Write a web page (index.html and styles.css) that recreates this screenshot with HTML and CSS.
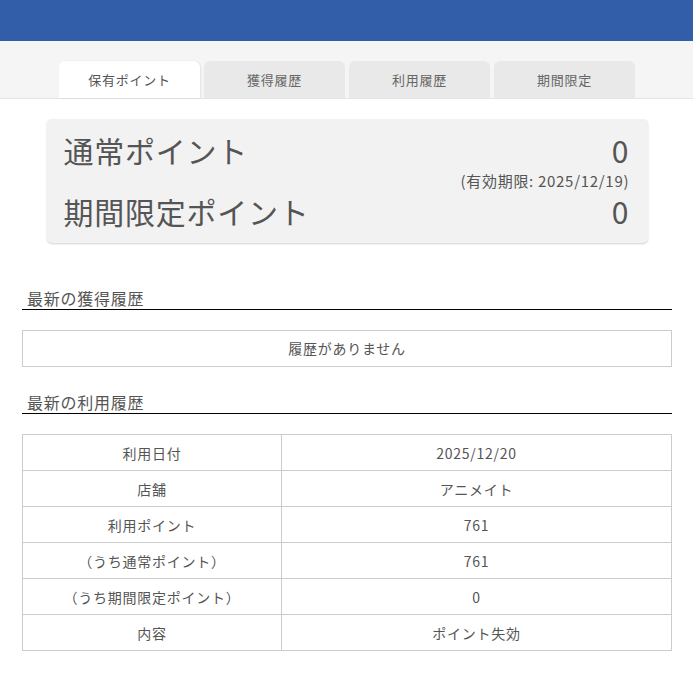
FILE: index.html
```html
<!DOCTYPE html>
<html lang="ja">
<head>
    <meta charset="UTF-8">
    <meta name="viewport" content="width=device-width, initial-scale=1.0">
    <title>ポイント</title>
    <link rel="stylesheet" href="styles.css">
</head>
<body>

<header class="top"></header>

<nav class="tabs">
    <div class="tab active">保有ポイント</div>
    <div class="tab">獲得履歴</div>
    <div class="tab">利用履歴</div>
    <div class="tab">期間限定</div>
</nav>

<main class="content">
    <div class="points">
        <div class="point-row">
            <span class="point-label">通常ポイント</span>
            <span class="point-value">0</span>
        </div>
        <div class="expire">(有効期限: 2025/12/19)</div>
        <div class="point-row">
            <span class="point-label">期間限定ポイント</span>
            <span class="point-value">0</span>
        </div>
    </div>

    <h2 class="section-title first">最新の獲得履歴</h2>
    <div class="empty">履歴がありません</div>

    <h2 class="section-title">最新の利用履歴</h2>
    <table class="history">
        <tr><th>利用日付</th><td>2025/12/20</td></tr>
        <tr><th>店舗</th><td>アニメイト</td></tr>
        <tr><th>利用ポイント</th><td>761</td></tr>
        <tr><th>（うち通常ポイント）</th><td>761</td></tr>
        <tr><th>（うち期間限定ポイント）</th><td>0</td></tr>
        <tr><th>内容</th><td>ポイント失効</td></tr>
    </table>
</main>

</body>
</html>
```

FILE: styles.css
```css
body {
    margin: 0;
    font-family: "Noto Sans CJK JP", "Noto Sans", sans-serif;
    color: #555;
    background: #fff;
    letter-spacing: 0.75px;
}

.top {
    height: 41px;
    background-color: #315da9;
}

.tabs {
    display: flex;
    justify-content: center;
    gap: 4px;
    padding-top: 20px;
    padding-left: 1px;
    background-color: #f5f5f5;
    border-bottom: 1px solid #e4e4e4;
}

.tab {
    width: 141px;
    height: 37px;
    line-height: 37px;
    text-align: center;
    font-size: 13px;
    color: #666;
    background-color: #e9e9e9;
    border-radius: 6px 6px 0 0;
}

.tab.active {
    background-color: #fff;
    color: #555;
    box-shadow: 1px 0 2px rgba(0, 0, 0, 0.08);
}

.content {
    padding: 0 21px 0 22px;
}

.points {
    width: 601px;
    box-sizing: border-box;
    margin: 20px auto 0;
    padding: 13px 19px 14px 17px;
    background-color: #f2f2f2;
    border-radius: 5px;
    box-shadow: 0 1px 2px rgba(0, 0, 0, 0.18);
}

.point-row {
    display: flex;
    justify-content: space-between;
    font-size: 30px;
    line-height: 36px;
}

.point-value {
    letter-spacing: 0;
}

.expire {
    margin: 4px 0 3px;
    text-align: right;
    font-size: 15px;
    line-height: 18px;
    letter-spacing: 0.7px;
    margin-right: -0.7px;
}

.section-title {
    margin: 24px 0 0;
    padding-left: 5px;
    font-size: 16px;
    font-weight: normal;
    line-height: 22px;
    border-bottom: 1px solid #000;
}

.section-title.first {
    margin-top: 44px;
}

.empty {
    margin-top: 20px;
    height: 35px;
    line-height: 35px;
    text-align: center;
    font-size: 14px;
    border: 1px solid #ccc;
}

.history {
    width: 100%;
    margin-top: 20px;
    border-collapse: collapse;
    font-size: 14px;
}

.history th,
.history td {
    height: 35px;
    padding: 0;
    text-align: center;
    font-weight: normal;
    border: 1px solid #ccc;
}

.history th {
    width: 258px;
}
```
